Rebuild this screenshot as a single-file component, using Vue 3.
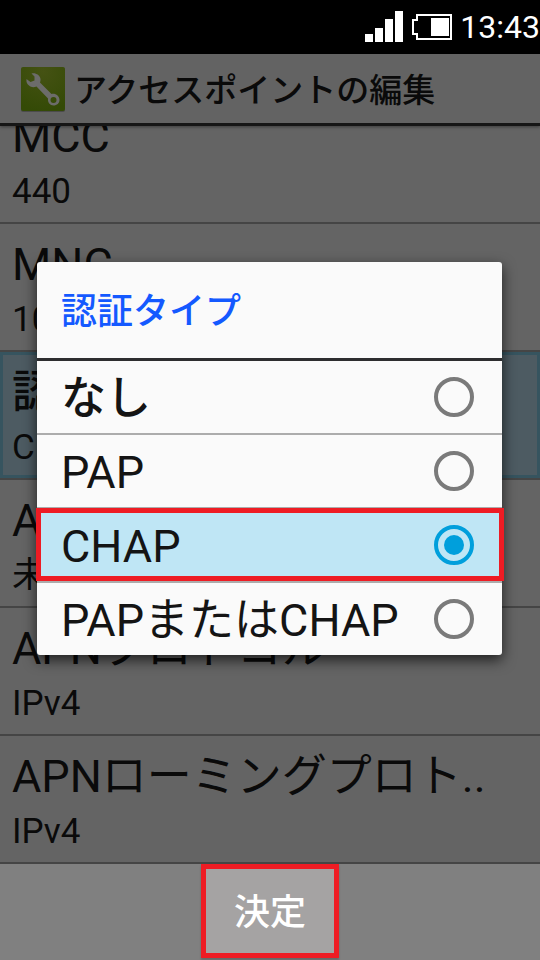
<template>
  <div class="screen">
    <!-- Status bar -->
    <div class="status-bar">
      <svg class="signal" width="38" height="32" viewBox="0 0 38 32" aria-hidden="true">
        <rect x="0" y="23" width="8" height="8" />
        <rect x="10" y="17" width="8" height="14" />
        <rect x="20" y="8" width="8" height="23" />
        <rect x="30" y="0" width="8" height="31" />
      </svg>
      <svg class="battery" width="40" height="26" viewBox="0 0 40 26" aria-hidden="true">
        <path d="M5 1H39V25H5V20H1V6H5Z" fill="none" stroke="#fff" stroke-width="2" />
        <rect x="19" y="4" width="18" height="18" fill="#fff" />
      </svg>
      <span class="clock">13:43</span>
    </div>

    <main class="content">
      <header class="app-header">
        <svg class="app-icon" width="46" height="46" viewBox="0 0 46 46" aria-hidden="true">
          <defs>
            <radialGradient id="iconBg" cx="0.5" cy="0.1" r="0.9">
              <stop offset="0" stop-color="#455213" />
              <stop offset="1" stop-color="#344a06" />
            </radialGradient>
          </defs>
          <rect x="1" y="2" width="44" height="44" rx="2" fill="#4b4b4b" />
          <rect x="1" y="1" width="44" height="44" rx="2" fill="url(#iconBg)" />
          <path
            fill="#6c6c6a"
            fill-rule="evenodd"
            d="M11.5 7.500C15.500 6.500 20 9 20.500 13C20.600 14.500 20.300 15.500 20 16.500L31.500 28C35.500 27 39.500 30 39.500 34C39.500 37 37 39.500 33.500 39.500C30 39.500 27.500 36.500 28 32.500L16.500 20.500C14 21.500 11 21.500 9 19.500C7 18 6 16 6.500 13L10.500 16L14.500 14.500L14.500 10.500ZM33.500 31A3 3 0 1 0 33.500 37A3 3 0 1 0 33.500 31Z"
          />
        </svg>
        <h1>アクセスポイントの編集</h1>
      </header>

      <!-- Settings list, scrolled slightly under the header -->
      <div class="list-view">
        <ul class="settings">
          <li v-for="item in settings" :key="item.title">
            <button type="button" class="setting" :class="{ focused: item.focused }">
              <span class="setting-title" :class="{ kana: isKana(item.title) }">{{ item.title }}</span>
              <span class="setting-value">{{ item.value }}</span>
            </button>
          </li>
        </ul>
      </div>

      <!-- Dialog -->
      <div class="overlay">
        <div class="dialog" role="dialog" aria-labelledby="dialog-title">
          <h2 id="dialog-title">認証タイプ</h2>
          <div class="options" role="radiogroup" aria-labelledby="dialog-title">
            <label
              v-for="(option, index) in options"
              :key="option"
              class="option"
              :class="{ selected: option === authType }"
              :for="'auth-' + index"
            >
              <span :class="{ kana: isKana(option) }">{{ option }}</span>
              <input type="radio" name="auth" :id="'auth-' + index" :value="option" v-model="authType" />
            </label>
          </div>
        </div>
      </div>
    </main>

    <footer class="softkeys">
      <button type="button" class="confirm">決定</button>
    </footer>
  </div>
</template>

<script setup>
import { ref } from 'vue';

const settings = [
  { title: 'MCC', value: '440' },
  { title: 'MNC', value: '10' },
  { title: '認証タイプ', value: 'CHAP', focused: true },
  { title: 'APNタイプ', value: '未設定' },
  { title: 'APNプロトコル', value: 'IPv4' },
  { title: 'APNローミングプロト..', value: 'IPv4' }
];

const options = ['なし', 'PAP', 'CHAP', 'PAPまたはCHAP'];

const authType = ref('CHAP');

// Labels without any latin characters get a heavier weight
const isKana = (text) => !/[A-Za-z0-9]/.test(text);
</script>

<style>
body {
  background: #808080;
}
</style>

<style scoped>
.screen {
  display: flex;
  flex-direction: column;
  min-height: 100vh;
  font-family: Roboto, "Noto Sans CJK JP", sans-serif;
  color: #0a0a0a;
}
.screen * {
  box-sizing: border-box;
}
h1,
h2,
ul {
  margin: 0;
  padding: 0;
}
button {
  font: inherit;
  color: inherit;
  border: 0;
}
.kana {
  font-weight: 500;
}

.status-bar {
  display: flex;
  justify-content: flex-end;
  align-items: center;
  height: 54px;
  background: #000;
  color: #fff;
}
.signal {
  fill: #fff;
  margin-right: 9px;
}
.battery {
  margin-right: 8px;
}
.clock {
  font-size: 32px;
  line-height: 54px;
}

.content {
  position: relative;
}
.app-header {
  position: relative;
  display: flex;
  align-items: center;
  gap: 8px;
  height: 72px;
  padding-left: 20px;
  background: #636363;
  border-bottom: 3px solid #161616;
  box-shadow: 0 1px 3px rgba(0, 0, 0, 0.4);
}
h1 {
  padding-top: 4px;
  font-size: 33px;
  font-weight: 500;
  line-height: 48px;
}

.list-view {
  overflow: hidden;
  background: #646464;
}
.settings {
  list-style: none;
  margin-top: -30px;
}
.settings li {
  border-bottom: 2px solid #454545;
}
.setting {
  display: flex;
  flex-direction: column;
  align-items: flex-start;
  width: 100%;
  padding: 11px 12px 5px;
  background: none;
  text-align: left;
  white-space: nowrap;
}
.setting.focused {
  background: #4d5b62;
  box-shadow: inset 0 0 0 3px #36545f;
}
.setting-title {
  font-size: 45px;
  line-height: 60px;
}
.setting-value {
  font-size: 35px;
  line-height: 50px;
}

.overlay {
  position: absolute;
  inset: 0;
  display: flex;
  align-items: center;
  padding: 0 38px 1px 37px;
}
.dialog {
  flex: 1;
  background: #fafafa;
  border-radius: 3px;
  box-shadow: 0 5px 14px rgba(0, 0, 0, 0.7);
}
h2 {
  padding: 26px 24px 22px;
  font-size: 36px;
  font-weight: 500;
  line-height: 48px;
  color: #1459ff;
  border-bottom: 3px solid #2d2d2f;
}
.option {
  position: relative;
  display: flex;
  justify-content: space-between;
  align-items: center;
  padding: 0 28px 0 24px;
  color: #141414;
  font-size: 45px;
  line-height: 72px;
  height: 72px;
}
.option span {
  padding-top: 3px;
}
.option + .option {
  height: 74px;
  border-top: 2px solid #acacac;
}
.option.selected {
  background: #bfe6f5;
}
.option.selected::after {
  content: "";
  position: absolute;
  inset: -1px -2px 0 -1px;
  border: 5px solid #ee1c24;
}
.option input {
  appearance: none;
  display: grid;
  place-items: center;
  width: 40px;
  height: 40px;
  margin: 0;
  border: 4px solid #7a7a7a;
  border-radius: 50%;
}
.option input:checked {
  border-color: #009fdc;
}
.option input:checked::before {
  content: "";
  width: 20px;
  height: 20px;
  border-radius: 50%;
  background: #009fdc;
}

.softkeys {
  flex: 1;
  display: flex;
  justify-content: center;
  align-items: flex-start;
  background: #808080;
}
.confirm {
  padding: 20px 28px 16px;
  border: 5px solid #ee1c24;
  background: #a5a3a3;
  color: #fff;
  font-size: 36px;
  font-weight: 500;
  line-height: 48px;
  box-shadow: 0 2px 2px rgba(0, 0, 0, 0.2);
}
</style>
